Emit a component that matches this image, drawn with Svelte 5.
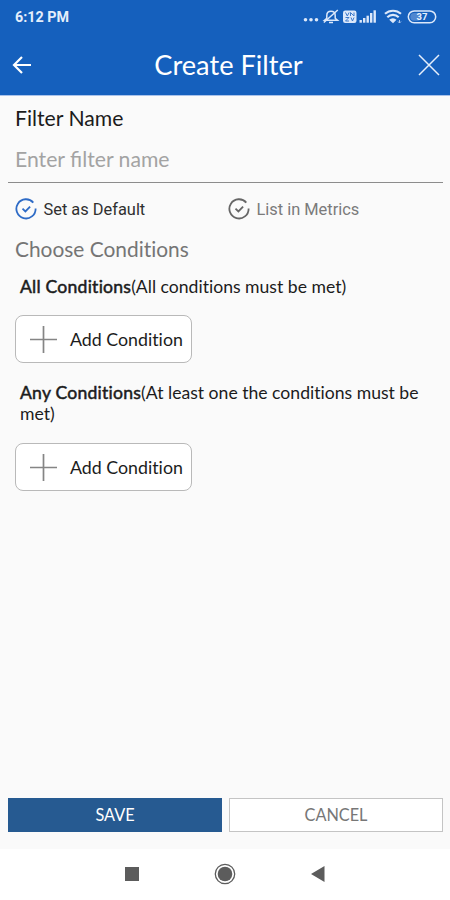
<script>
	let name = $state('');
	let isDefault = $state(true);
	let inMetrics = $state(false);

	const groups = [
		{ title: 'All Conditions', hint: '(All conditions must be met)' },
		{ title: 'Any Conditions', hint: '(At least one the conditions must be met)' }
	];
</script>

{#snippet check()}
	<svg class="check" viewBox="0 0 22 22">
		<path d="M18.3 4.6A9.6 9.6 0 1 0 20.6 10.6" />
		<path d="M7.5 10.7l2.9 2.8 4.7-4.8" />
	</svg>
{/snippet}

<div class="screen">
	<div class="status">
		<span class="time">6:12 PM</span>
		<svg class="indicators" width="136" height="18" viewBox="0 0 136 18">
			<g fill="#dce8fa">
				<circle cx="4.5" cy="11.8" r="1.8" />
				<circle cx="10" cy="11.8" r="1.8" />
				<circle cx="15.5" cy="11.8" r="1.8" />
				<rect x="42" y="2.5" width="13.5" height="12.5" rx="2.2" />
				<rect x="58.5" y="12" width="2.4" height="2.7" />
				<rect x="62" y="10" width="2.4" height="4.7" />
				<rect x="65.5" y="7.7" width="2.4" height="7" />
				<rect x="69" y="5" width="2.4" height="9.7" />
				<rect x="72.5" y="2.3" width="2.4" height="12.4" />
				<path d="M88.2 11.8L92 15.3l3.5-3.5a5 5 0 0 0-7.3 0z" />
			</g>
			<g fill="none" stroke="#dce8fa" stroke-width="1.5">
				<path d="M23.5 12.2l2.3-2V7.4c0-2.6 1.6-4.1 4.2-4.1s4.2 1.5 4.2 4.1v2.8l2.3 2z" />
				<path d="M28 14.4h4M22.8 14.5L36.8 2" />
				<path stroke-width="2.2" d="M84 5.8a12 12 0 0 1 16 0M86.3 9.2a8.4 8.4 0 0 1 11.4 0" />
				<rect x="107.3" y="2.9" width="27.4" height="11.8" rx="5.9" />
			</g>
			<path d="M44.5 4.5l1.8 3.5 1.8-3.5M49.5 8V4.5L53 8V4.5M44.5 9.5H48L44.5 13H48M50 9.5l1.5 3.5L53 9.5" fill="none" stroke="#3f7bcb" />
			<rect x="109.3" y="4.9" width="11" height="7.8" rx="3.9" fill="#4f87d0" />
			<path d="M98.5 12v3M97 13.5l1.5 1.5 1.5-1.5" stroke="#a9c6ee" fill="none" />
			<text x="121" y="12.2" text-anchor="middle">37</text>
		</svg>
	</div>

	<header>
		<button class="back" aria-label="Back">
			<svg width="20" height="20" viewBox="0 0 20 20">
				<path d="M19 10H2M10 2L2 10l8 8" fill="none" stroke="#fff" stroke-width="2.2" />
			</svg>
		</button>
		<h1>Create Filter</h1>
		<button class="close" aria-label="Close">
			<svg width="22" height="22" viewBox="0 0 22 22">
				<path d="M1 1l20 20M21 1L1 21" stroke="#e6effb" stroke-width="1.5" />
			</svg>
		</button>
	</header>

	<main>
		<label class="title" for="filter-name">Filter Name</label>
		<input id="filter-name" placeholder="Enter filter name" bind:value={name} />

		<div class="options">
			<button class="option" class:on={isDefault} onclick={() => (isDefault = !isDefault)}>
				{@render check()}
				<span>Set as Default</span>
			</button>
			<button class="option" class:on={inMetrics} onclick={() => (inMetrics = !inMetrics)}>
				{@render check()}
				<span>List in Metrics</span>
			</button>
		</div>

		<h2>Choose Conditions</h2>
		{#each groups as group}
			<section>
				<p><b>{group.title}</b>{group.hint}</p>
				<button class="add">
					<svg width="28" height="28" viewBox="0 0 28 28">
						<path d="M13.5 1v27M0 14.5h27" stroke="#858585" stroke-width="1.7" />
					</svg>
					<span>Add Condition</span>
				</button>
			</section>
		{/each}
	</main>

	<div class="actions">
		<button class="save">SAVE</button>
		<button class="cancel">CANCEL</button>
	</div>

	<nav>
		<svg width="14" height="14" viewBox="0 0 14 14"><rect width="14" height="14" fill="#5c5c5c" /></svg>
		<svg width="22" height="22" viewBox="0 0 22 22">
			<circle cx="11" cy="11" r="9.7" fill="none" stroke="#5c5c5c" stroke-width="1.3" />
			<circle cx="11" cy="11" r="7.3" fill="#5c5c5c" />
		</svg>
		<svg width="14" height="16" viewBox="0 0 14 16"><path d="M0 8L13.5 0v16z" fill="#5c5c5c" /></svg>
	</nav>
</div>

<style>
	.screen {
		display: flex;
		flex-direction: column;
		width: 450px;
		height: 900px;
		overflow: hidden;
		background: #fafafa;
		color: #1c1c1c;
		font-family: Lato, sans-serif;
	}
	button, input {
		margin: 0;
		padding: 0;
		border: 0;
		background: none;
		color: inherit;
		font-family: inherit;
	}
	svg { display: block; flex: none; }

	.status {
		display: flex;
		justify-content: space-between;
		align-items: center;
		height: 34px;
		padding: 0 13px 0 15px;
		box-sizing: border-box;
		background: #1560bd;
	}
	.time {
		font: 700 14.3px/34px Roboto, sans-serif;
		color: #e4eefb;
	}
	.indicators text {
		font: 700 9.5px Roboto, sans-serif;
		fill: #e8f1fc;
	}

	header {
		display: flex;
		align-items: center;
		height: 62px;
		padding: 0 10px 0 12px;
		box-sizing: border-box;
		background: #1560bd;
		border-bottom: 1px solid #a9c2ea;
	}
	h1 {
		flex: 1;
		margin: 0;
		padding-left: 7px;
		color: #fff;
		font-size: 27.2px;
		font-weight: 400;
		text-align: center;
	}

	main {
		flex: 1;
		padding: 0 7px 0 8px;
	}
	.title {
		display: block;
		padding: 8px 7px 0;
		font-size: 21.2px;
		line-height: 28px;
	}
	input {
		display: block;
		width: 100%;
		height: 51px;
		padding: 4px 7px 0;
		box-sizing: border-box;
		border-bottom: 1px solid #8c8c8c;
		font-size: 21.2px;
	}
	input::placeholder { color: #a3a3a3; opacity: 1; }

	.options {
		display: flex;
		padding: 15px 7px 0;
	}
	.option {
		display: flex;
		flex: none;
		align-items: center;
		gap: 6.5px;
		width: 213px;
		height: 22px;
		color: #7b7b7b;
		font: 400 16.4px/22px Roboto, sans-serif;
	}
	.option + .option { width: auto; }
	.option span { padding-top: 2px; }
	.option.on { color: #303030; }
	.check {
		width: 22px;
		height: 22px;
		fill: none;
		stroke: #666;
		stroke-width: 1.8;
	}
	.on .check { stroke: #2e6bc6; }

	h2 {
		margin: 15px 7px 0;
		color: #757575;
		font-size: 20.9px;
		font-weight: 400;
		font-variant-ligatures: none;
		line-height: 28px;
	}

	section {
		padding: 0 7px 19px;
		font-variant-ligatures: none;
	}
	p {
		margin: 13px 5px 18px;
		font-size: 17.6px;
		line-height: 21px;
	}
	/* slightly heavier than regular, lighter than Lato Bold */
	p b {
		font-weight: 400;
		letter-spacing: 0.22px;
		-webkit-text-stroke: 0.5px;
	}
	section + section p {
		margin-top: 0;
		margin-bottom: 19px;
	}
	.add {
		display: flex;
		align-items: center;
		gap: 12px;
		width: 177px;
		height: 48px;
		padding: 0 0 0 14px;
		box-sizing: border-box;
		border: 1px solid #b9b9b9;
		border-radius: 8px;
		background: #fff;
		font-size: 17.8px;
		font-variant-ligatures: none;
	}

	.actions {
		display: flex;
		gap: 7px;
		padding: 0 7px 17px 8px;
	}
	.actions button {
		flex: 1;
		height: 34px;
		padding-bottom: 2px;
		border: 1px solid #c4c4c4;
		font-size: 16.3px;
	}
	.actions .save {
		border-color: #265a91;
		background: #265a91;
		color: #fff;
	}
	.actions .cancel {
		background: #fff;
		color: #777;
	}

	nav {
		display: flex;
		align-items: center;
		gap: 75px;
		height: 51px;
		padding: 0 0 2px 125px;
		box-sizing: border-box;
		background: #fff;
	}
</style>
